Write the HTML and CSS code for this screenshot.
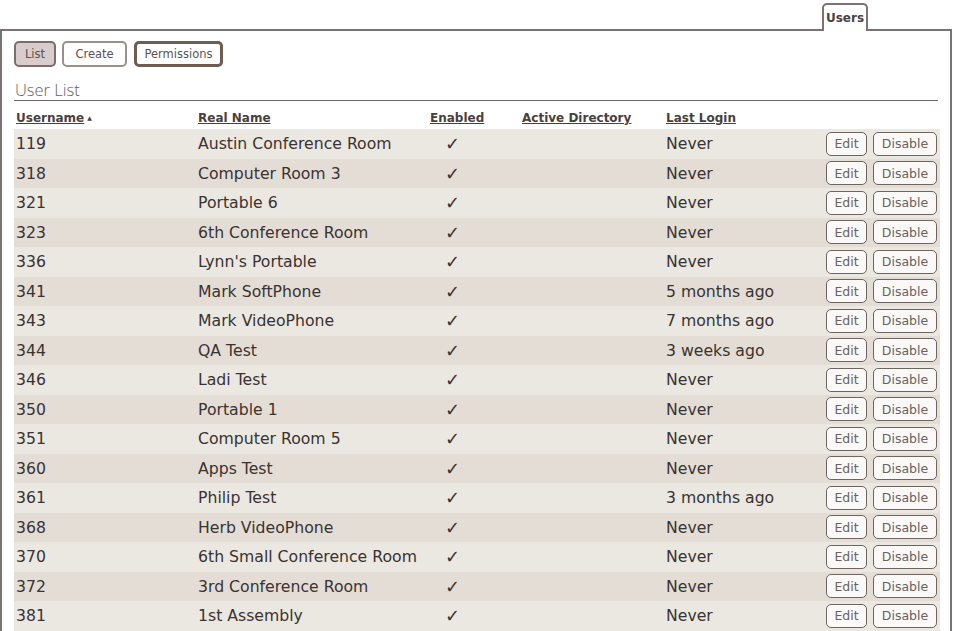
FILE: index.html
```html
<!DOCTYPE html>
<html>
<head>
<meta charset="utf-8">
<link rel="stylesheet" href="styles.css">
</head>
<body>
<div class="tabs"><div class="tab">Users</div></div>
<div class="panel">
  <div class="toolbar">
    <button class="tb active">List</button>
    <button class="tb">Create</button>
    <button class="tb focus">Permissions</button>
  </div>
  <div class="heading">User List</div>
  <table class="users">
    <thead>
      <tr>
        <th class="c-user"><span class="sort">Username</span><span class="arrow">▲</span></th>
        <th class="c-name"><span class="sort">Real Name</span></th>
        <th class="c-en"><span class="sort">Enabled</span></th>
        <th class="c-ad"><span class="sort">Active Directory</span></th>
        <th class="c-login"><span class="sort">Last Login</span></th>
        <th class="c-act"></th>
      </tr>
    </thead>
    <tbody>
      <tr><td>119</td><td>Austin Conference Room</td><td class="chk">✓</td><td></td><td>Never</td><td class="act"><button class="rb">Edit</button><button class="rb">Disable</button></td></tr>
      <tr><td>318</td><td>Computer Room 3</td><td class="chk">✓</td><td></td><td>Never</td><td class="act"><button class="rb">Edit</button><button class="rb">Disable</button></td></tr>
      <tr><td>321</td><td>Portable 6</td><td class="chk">✓</td><td></td><td>Never</td><td class="act"><button class="rb">Edit</button><button class="rb">Disable</button></td></tr>
      <tr><td>323</td><td>6th Conference Room</td><td class="chk">✓</td><td></td><td>Never</td><td class="act"><button class="rb">Edit</button><button class="rb">Disable</button></td></tr>
      <tr><td>336</td><td>Lynn's Portable</td><td class="chk">✓</td><td></td><td>Never</td><td class="act"><button class="rb">Edit</button><button class="rb">Disable</button></td></tr>
      <tr><td>341</td><td>Mark SoftPhone</td><td class="chk">✓</td><td></td><td>5 months ago</td><td class="act"><button class="rb">Edit</button><button class="rb">Disable</button></td></tr>
      <tr><td>343</td><td>Mark VideoPhone</td><td class="chk">✓</td><td></td><td>7 months ago</td><td class="act"><button class="rb">Edit</button><button class="rb">Disable</button></td></tr>
      <tr><td>344</td><td>QA Test</td><td class="chk">✓</td><td></td><td>3 weeks ago</td><td class="act"><button class="rb">Edit</button><button class="rb">Disable</button></td></tr>
      <tr><td>346</td><td>Ladi Test</td><td class="chk">✓</td><td></td><td>Never</td><td class="act"><button class="rb">Edit</button><button class="rb">Disable</button></td></tr>
      <tr><td>350</td><td>Portable 1</td><td class="chk">✓</td><td></td><td>Never</td><td class="act"><button class="rb">Edit</button><button class="rb">Disable</button></td></tr>
      <tr><td>351</td><td>Computer Room 5</td><td class="chk">✓</td><td></td><td>Never</td><td class="act"><button class="rb">Edit</button><button class="rb">Disable</button></td></tr>
      <tr><td>360</td><td>Apps Test</td><td class="chk">✓</td><td></td><td>Never</td><td class="act"><button class="rb">Edit</button><button class="rb">Disable</button></td></tr>
      <tr><td>361</td><td>Philip Test</td><td class="chk">✓</td><td></td><td>3 months ago</td><td class="act"><button class="rb">Edit</button><button class="rb">Disable</button></td></tr>
      <tr><td>368</td><td>Herb VideoPhone</td><td class="chk">✓</td><td></td><td>Never</td><td class="act"><button class="rb">Edit</button><button class="rb">Disable</button></td></tr>
      <tr><td>370</td><td>6th Small Conference Room</td><td class="chk">✓</td><td></td><td>Never</td><td class="act"><button class="rb">Edit</button><button class="rb">Disable</button></td></tr>
      <tr><td>372</td><td>3rd Conference Room</td><td class="chk">✓</td><td></td><td>Never</td><td class="act"><button class="rb">Edit</button><button class="rb">Disable</button></td></tr>
      <tr><td>381</td><td>1st Assembly</td><td class="chk">✓</td><td></td><td>Never</td><td class="act"><button class="rb">Edit</button><button class="rb">Disable</button></td></tr>
    </tbody>
  </table>
</div>
</body>
</html>
```
FILE: styles.css
```css
html, body {
  margin: 0;
  padding: 0;
  background: #ffffff;
  overflow: hidden;
}
body {
  font-family: "DejaVu Sans", sans-serif;
  color: #3a3331;
  width: 954px;
  height: 631px;
}
.tabs {
  display: flex;
  justify-content: flex-end;
  padding-top: 3px;
  padding-right: 86px;
  height: 29px;
  box-sizing: border-box;
}
.tab {
  position: relative;
  z-index: 1;
  width: 46px;
  height: 28px;
  box-sizing: border-box;
  border: 2px solid #7b7373;
  border-bottom: none;
  border-radius: 5px 5px 0 0;
  background: #fff;
  font-size: 12px;
  font-weight: bold;
  color: #4a4240;
  text-align: center;
  padding-top: 6px;
}
.panel {
  border: 2px solid #7b7373;
  border-bottom: none;
  margin-right: 2px;
  padding: 10px 12px 0 12px;
  height: 620px;
  box-sizing: border-box;
}
.toolbar {
  display: flex;
  gap: 6px;
  height: 26px;
}
.tb {
  font-family: "DejaVu Sans", sans-serif;
  font-size: 11.5px;
  color: #5a5250;
  background: #fff;
  border: 2px solid #9a8f8c;
  border-radius: 5px;
  height: 26px;
  padding: 0;
  margin: 0;
}
.tb.active {
  background: #d8cccc;
  border-color: #7d6c6c;
  width: 42px;
}
.tb:nth-child(2) { width: 65px; }
.tb.focus {
  border: 3px solid #6e5e52;
  width: 89px;
  margin-left: 1px;
}
.heading {
  margin-top: 14px;
  font-family: "Open Sans", "DejaVu Sans", sans-serif;
  font-size: 16.5px;
  font-weight: 300;
  color: #6a6260;
  padding-left: 1px;
  height: 20px;
  line-height: 18px;
  border-bottom: 1px solid #6b6262;
  box-sizing: border-box;
}
.users {
  width: 926px;
  border-collapse: collapse;
  margin-top: 8px;
}
.users th {
  font-size: 12px;
  font-weight: bold;
  text-align: left;
  color: #4a3f3c;
  padding: 0 0 4px 2px;
  height: 16px;
  vertical-align: bottom;
}
.sort { text-decoration: underline; }
.arrow { font-size: 6px; margin-left: 3px; vertical-align: 2px; }
.c-user { width: 180px; }
.c-name { width: 230px; }
.c-en { width: 90px; }
.c-ad { width: 142px; }
.c-login { width: 150px; }
.users td {
  font-size: 15.7px;
  height: 29.5px;
  padding: 0 0 0 2px;
  color: #3a3331;
  vertical-align: middle;
}
.users tbody tr:nth-child(odd) { background: #ebe7e1; }
.users tbody tr:nth-child(even) { background: #e3ddd6; }
.users td.chk { padding-left: 17px; font-size: 18px; color: #3a3331; }
.users td.act { text-align: right; padding-right: 3px; white-space: nowrap; }
.rb {
  font-family: "DejaVu Sans", sans-serif;
  font-size: 12.5px;
  color: #6a6260;
  background: #fbf9f7;
  border: 1px solid #6e6560;
  border-radius: 5px;
  height: 24px;
  padding: 0;
  margin: 0 0 0 6px;
  vertical-align: middle;
}
.rb:first-child { width: 41px; }
.rb:last-child { width: 64px; }
```
